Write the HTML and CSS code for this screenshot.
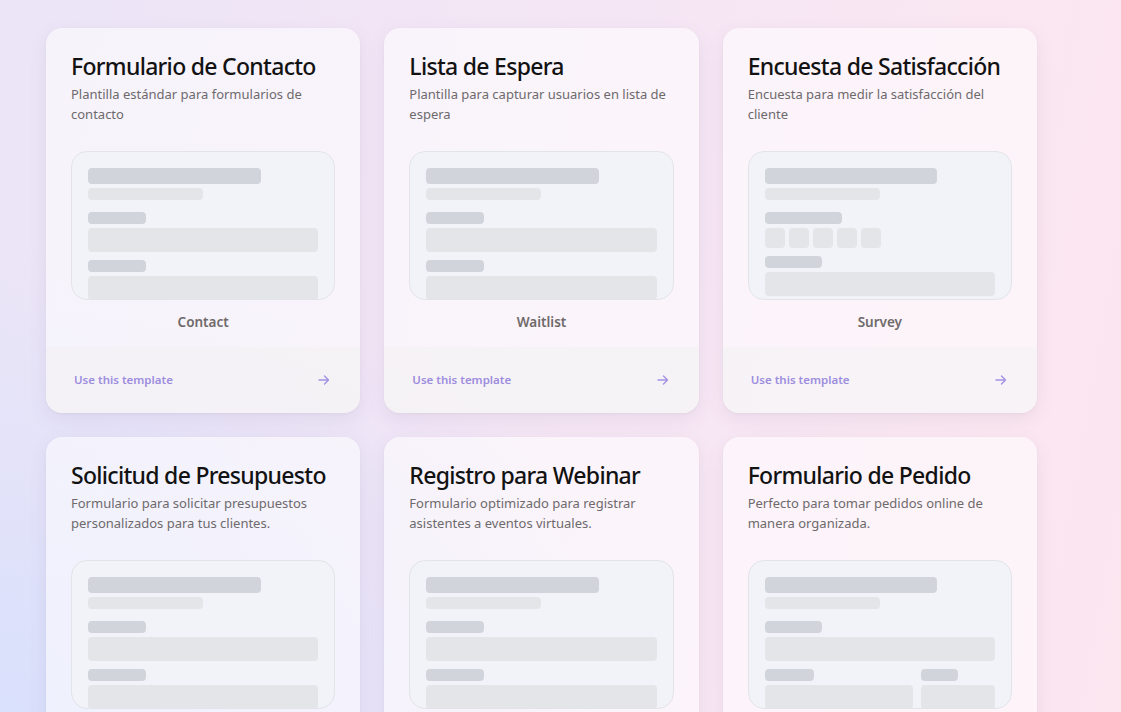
FILE: index.html
```html
<!DOCTYPE html>
<html lang="es">
<head>
<meta charset="utf-8">
<title>Plantillas</title>
<link rel="stylesheet" href="styles.css">
</head>
<body>
<main class="page">
  <div class="grid">
    <article class="card">
      <div class="card-body">
        <h2 class="title">Formulario de Contacto</h2>
        <p class="desc">Plantilla estándar para formularios de contacto</p>
        <div class="preview">
          <div class="sk sk-h1"></div>
          <div class="sk sk-h2"></div>
          <div class="sk sk-label"></div>
          <div class="sk sk-input"></div>
          <div class="sk sk-label"></div>
          <div class="sk sk-input"></div>
        </div>
        <div class="kind">Contact</div>
      </div>
      <a class="card-foot" href="#"><span>Use this template</span>
        <svg class="arrow" viewBox="0 0 16 16" width="16" height="16"><path d="M3 8h9.5M8.5 4l4 4-4 4" fill="none" stroke="currentColor" stroke-width="1.4" stroke-linecap="round" stroke-linejoin="round"/></svg></a>
    </article>

    <article class="card">
      <div class="card-body">
        <h2 class="title">Lista de Espera</h2>
        <p class="desc">Plantilla para capturar usuarios en lista de espera</p>
        <div class="preview">
          <div class="sk sk-h1"></div>
          <div class="sk sk-h2"></div>
          <div class="sk sk-label"></div>
          <div class="sk sk-input"></div>
          <div class="sk sk-label"></div>
          <div class="sk sk-input"></div>
        </div>
        <div class="kind">Waitlist</div>
      </div>
      <a class="card-foot" href="#"><span>Use this template</span>
        <svg class="arrow" viewBox="0 0 16 16" width="16" height="16"><path d="M3 8h9.5M8.5 4l4 4-4 4" fill="none" stroke="currentColor" stroke-width="1.4" stroke-linecap="round" stroke-linejoin="round"/></svg></a>
    </article>

    <article class="card">
      <div class="card-body">
        <h2 class="title">Encuesta de Satisfacción</h2>
        <p class="desc">Encuesta para medir la satisfacción del cliente</p>
        <div class="preview">
          <div class="sk sk-h1"></div>
          <div class="sk sk-h2"></div>
          <div class="sk sk-label sk-wide"></div>
          <div class="rating">
            <div class="sk sk-star"></div>
            <div class="sk sk-star"></div>
            <div class="sk sk-star"></div>
            <div class="sk sk-star"></div>
            <div class="sk sk-star"></div>
          </div>
          <div class="sk sk-label"></div>
          <div class="sk sk-input"></div>
        </div>
        <div class="kind">Survey</div>
      </div>
      <a class="card-foot" href="#"><span>Use this template</span>
        <svg class="arrow" viewBox="0 0 16 16" width="16" height="16"><path d="M3 8h9.5M8.5 4l4 4-4 4" fill="none" stroke="currentColor" stroke-width="1.4" stroke-linecap="round" stroke-linejoin="round"/></svg></a>
    </article>

    <article class="card">
      <div class="card-body">
        <h2 class="title">Solicitud de Presupuesto</h2>
        <p class="desc">Formulario para solicitar presupuestos personalizados para tus clientes.</p>
        <div class="preview">
          <div class="sk sk-h1"></div>
          <div class="sk sk-h2"></div>
          <div class="sk sk-label"></div>
          <div class="sk sk-input"></div>
          <div class="sk sk-label"></div>
          <div class="sk sk-input"></div>
        </div>
        <div class="kind">Quote</div>
      </div>
      <a class="card-foot" href="#"><span>Use this template</span>
        <svg class="arrow" viewBox="0 0 16 16" width="16" height="16"><path d="M3 8h9.5M8.5 4l4 4-4 4" fill="none" stroke="currentColor" stroke-width="1.4" stroke-linecap="round" stroke-linejoin="round"/></svg></a>
    </article>

    <article class="card">
      <div class="card-body">
        <h2 class="title">Registro para Webinar</h2>
        <p class="desc">Formulario optimizado para registrar asistentes a eventos virtuales.</p>
        <div class="preview">
          <div class="sk sk-h1"></div>
          <div class="sk sk-h2"></div>
          <div class="sk sk-label"></div>
          <div class="sk sk-input"></div>
          <div class="sk sk-label"></div>
          <div class="sk sk-input"></div>
        </div>
        <div class="kind">Webinar</div>
      </div>
      <a class="card-foot" href="#"><span>Use this template</span>
        <svg class="arrow" viewBox="0 0 16 16" width="16" height="16"><path d="M3 8h9.5M8.5 4l4 4-4 4" fill="none" stroke="currentColor" stroke-width="1.4" stroke-linecap="round" stroke-linejoin="round"/></svg></a>
    </article>

    <article class="card">
      <div class="card-body">
        <h2 class="title">Formulario de Pedido</h2>
        <p class="desc">Perfecto para tomar pedidos online de manera organizada.</p>
        <div class="preview">
          <div class="sk sk-h1"></div>
          <div class="sk sk-h2"></div>
          <div class="sk sk-label"></div>
          <div class="sk sk-input"></div>
          <div class="split">
            <div class="split-col">
              <div class="sk sk-label sk-third"></div>
              <div class="sk sk-input"></div>
            </div>
            <div class="split-col">
              <div class="sk sk-label sk-half"></div>
              <div class="sk sk-input"></div>
            </div>
          </div>
        </div>
        <div class="kind">Order</div>
      </div>
      <a class="card-foot" href="#"><span>Use this template</span>
        <svg class="arrow" viewBox="0 0 16 16" width="16" height="16"><path d="M3 8h9.5M8.5 4l4 4-4 4" fill="none" stroke="currentColor" stroke-width="1.4" stroke-linecap="round" stroke-linejoin="round"/></svg></a>
    </article>
  </div>
</main>
</body>
</html>
```

FILE: styles.css
```css
* { box-sizing: border-box; }

html, body {
  margin: 0;
  height: 100%;
}

body {
  font-family: "Noto Sans", "Open Sans", "Liberation Sans", sans-serif;
  color: #111;
  background:
    radial-gradient(ellipse 900px 650px at 0% 100%, rgba(216, 224, 252, 0.95), rgba(216, 224, 252, 0) 72%),
    linear-gradient(100deg, #ebe5f7 0%, #f4e6f5 45%, #fae7f2 80%, #fce6f0 100%);
  overflow: hidden;
}

.page {
  padding: 28px 0 0 46px;
}

.grid {
  width: 991px;
  display: grid;
  grid-template-columns: repeat(3, 1fr);
  gap: 24px;
}

.card {
  display: flex;
  flex-direction: column;
  border-radius: 16px;
  overflow: hidden;
  background: rgba(255, 255, 255, 0.55);
  box-shadow: 0 6px 18px rgba(120, 100, 150, 0.10), 0 1px 3px rgba(0, 0, 0, 0.04);
}

.card-body {
  padding: 24px 25px 15px 25px;
}

.title {
  margin: 0 0 4px;
  font-size: 23px;
  line-height: 28px;
  font-weight: 500;
  letter-spacing: -0.7px;
  color: #121212;
}

.desc {
  margin: 0;
  font-size: 13px;
  line-height: 20px;
  color: #6e6a6c;
  min-height: 40px;
}

.preview {
  margin-top: 27px;
  height: 149px;
  border: 1px solid #e3e4ea;
  border-radius: 16px;
  background: #f1f3f8;
  padding: 16px;
  overflow: hidden;
}

.sk {
  border-radius: 4px;
  background: #e4e5e9;
}

.sk-h1 {
  width: 75%;
  height: 16px;
  background: #d1d4db;
}

.sk-h2 {
  width: 50%;
  height: 12px;
  margin-top: 4px;
}

.sk-label {
  width: 25%;
  height: 12px;
  margin-top: 12px;
  background: #d1d4db;
}

.sk-input {
  width: 100%;
  height: 24px;
  margin-top: 4px;
}

.sk-input + .sk-label { margin-top: 8px; }

.sk-wide { width: 33.5%; }

.rating {
  display: flex;
  gap: 4px;
  margin-top: 4px;
}

.sk-star {
  width: 20px;
  height: 20px;
}

.rating + .sk-label { margin-top: 8px; }

.split {
  display: grid;
  grid-template-columns: 2fr 1fr;
  gap: 8px;
  margin-top: 8px;
}

.split .sk-label { margin-top: 0; }
.sk-third { width: 33.3%; }
.sk-half { width: 50%; }

.kind {
  margin-top: 12px;
  text-align: center;
  font-size: 13.5px;
  line-height: 20px;
  font-weight: 600;
  color: #6f6a6a;
}

.card-foot {
  margin-top: auto;
  display: flex;
  align-items: center;
  justify-content: space-between;
  padding: 24px 28px 24px 28px;
  height: 66px;
  background: rgba(244, 242, 244, 0.6);
  color: #9d8ddf;
  text-decoration: none;
  font-size: 11.5px;
  line-height: 18px;
  font-weight: 600;
}

.arrow {
  display: block;
  color: #a393e4;
}
```
